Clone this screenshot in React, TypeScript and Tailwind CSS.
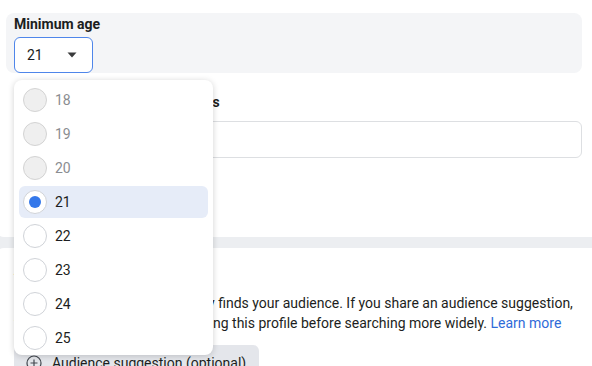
import React from 'react';

const ages = [18, 19, 20, 21, 22, 23, 24, 25];
const selectedAge = 21;

const Radio: React.FC<{ checked: boolean; disabled: boolean }> = ({ checked, disabled }) => (
  <span
    className={
      'flex h-6 w-6 shrink-0 items-center justify-center rounded-full border ' +
      (disabled ? 'border-[#d3d3d3] bg-[#efefef]' : 'border-[#d0d3d8] bg-white')
    }
  >
    {checked && <span className="h-3 w-3 rounded-full bg-[#3478ea]" />}
  </span>
);

const AgeMenu: React.FC = () => (
  <div className="absolute left-[14px] top-[80px] h-[275px] w-[199px] overflow-hidden rounded-lg bg-white pt-[3px] shadow-[0_1px_6px_rgba(0,0,0,0.18)]">
    {ages.map((age) => {
      const disabled = age < 21;
      const checked = age === selectedAge;
      return (
        <div key={age} className="h-[34px] px-[5px] py-[1px]">
          <div
            className={
              'flex h-8 items-center gap-2 rounded-md pl-[4px] ' + (checked ? 'bg-[#e6ecf8]' : '')
            }
          >
            <Radio checked={checked} disabled={disabled} />
            <span className={'text-[14px] ' + (disabled ? 'text-[#8a8d91]' : 'text-[#1c1e21]')}>{age}</span>
          </div>
        </div>
      );
    })}
  </div>
);

export default function App() {
  return (
    <div
      className="relative h-[366px] w-[592px] overflow-hidden bg-[#eceef1] text-[#1c1e21]"
      style={{ fontFamily: 'Roboto, "Liberation Sans", sans-serif' }}
    >
      {/* top card */}
      <div className="ml-[-4px] h-[237px] w-[610px] rounded-b-lg bg-white pl-[10px] pr-[24px] pt-[13px]">
        <div className="h-[60px] rounded-lg bg-[#f4f5f7] px-2">
          <div className="pt-[2px] text-[14px] font-bold leading-[18px]">Minimum age</div>
          <div className="mt-[4px] flex h-[36px] w-[79px] items-center justify-between rounded-md border border-[#4f86ea] bg-white pl-[12px] pr-[15px]">
            <span className="text-[14px]">21</span>
            <svg width="10" height="6" viewBox="0 0 10 6">
              <path d="M0.5 0.5h9l-4.5 5z" fill="#3a3b3c" />
            </svg>
          </div>
        </div>
        <div className="mt-[20px] px-2 text-[14px] font-bold leading-[18px]">Exclude these custom audiences</div>
        <div className="ml-2 mt-[10px] flex h-[37px] items-center rounded-md border border-[#dddfe2] pl-[17px] text-[14px] text-[#606770]">
          Search existing audiences
        </div>
      </div>

      {/* bottom card */}
      <div className="ml-[-4px] mt-[11px] h-[140px] w-[610px] rounded-t-lg bg-white pl-[18px] pr-[24px] pt-[12px]">
        <div className="text-[15px] font-bold leading-[20px]">Advantage+ audience</div>
        <p className="mt-[13px] whitespace-nowrap text-[14px] leading-[20px] text-[#1c1e21]">
          Our ad technology automatically finds your audience. If you share an audience suggestion,
          <br />
          we'll prioritise audiences matching this profile before searching more widely.{' '}
          <span className="text-[#2f6bd8]">Learn more</span>
        </p>
        <div className="mt-[12px] flex h-[36px] w-[245px] items-center gap-[10px] rounded-md bg-[#e4e6eb] px-3 text-[14px]">
          <svg width="16" height="16" viewBox="0 0 16 16" fill="none" stroke="#444950" strokeWidth="1.2">
            <circle cx="8" cy="8" r="7" />
            <path d="M8 4.5v7M4.5 8h7" />
          </svg>
          Audience suggestion (optional)
        </div>
      </div>

      <AgeMenu />
    </div>
  );
}
